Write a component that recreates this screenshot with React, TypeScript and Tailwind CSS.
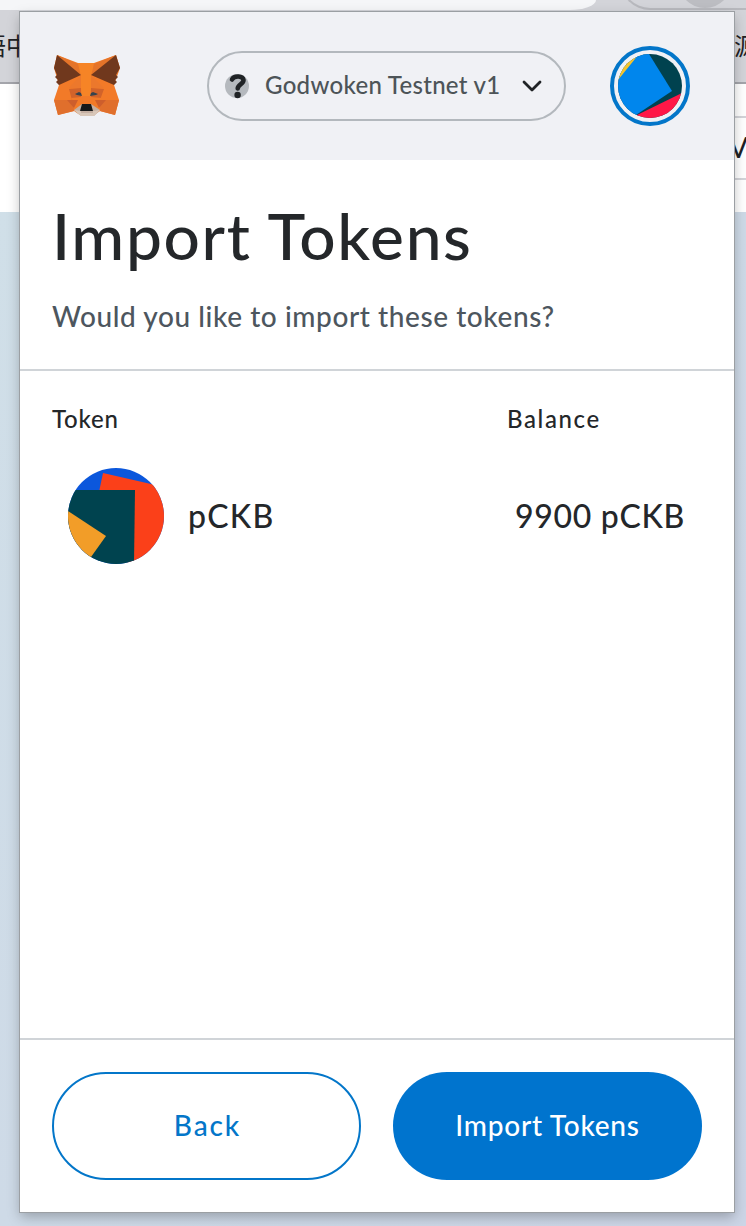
import React from "react";

function Fox() {
  return (
    <svg width="68" height="64" viewBox="0 0 68 64" aria-label="MetaMask">
      <path fill="#f27a28" d="m4 1 21 8h16l22-8 4 13-6 17 5 15-4 15-15-4-6 4H27l-6-4-16 4L1 46l5-15L1 14z" />
      <path fill="#f68426" d="M25 9h16l-4 33h-8z" />
      <path fill="#e57429" d="m4 1 21 9 3 12zM63 1 41 10l-3 12z" />
      <path fill="#e06f2c" d="M1 46h19l1 11-16 4zM47 46h19l-4 15-15-4z" />
      <path fill="#ec782c" d="m16 34 12-13v13zM51 34 38 21v13z" />
      <path fill="#d2632a" d="m16 35 12-1v9l-9 3zM51 35l-13-1v9l9 3z" />
      <path fill="#f27a28" d="m18 44 11-1 2 9-11-5zM49 44l-12-1-2 9 12-5z" />
      <path fill="#cd5e2c" d="M14 46h11l-4 8zM53 46H42l4 8z" />
      <path fill="#70381d" d="M4 1 28 21 6 31l-3-3 2-2-3-3 2-2-3-7zM63 1 38 21l23 10 3-3-2-2 3-3-2-2 4-7z" />
      <path fill="#36434e" d="m22 40 4-2 2 1 1 3-5-1zM45 40l-5-2-2 1-1 3 6-1z" />
      <path fill="#c4afa2" d="m21 56 8-6h9l9 6-6 6H28z" />
      <path fill="#d8c7b9" d="m21 56 7 1v2h12v-2l7-1-6 6H28z" />
      <path fill="#17191a" d="M29 50h9l2 7H27z" />
    </svg>
  );
}

function AccountIcon() {
  return (
    <svg width="64" height="64" viewBox="0 0 64 64" className="rounded-full">
      <path fill="#00424f" d="M0 0h64v64H0z" />
      <path fill="#0086ed" d="M0 22 20 0h11l23 37-36 24H0z" />
      <path fill="#f3c42d" d="M0 0h21L0 26z" />
      <path fill="#ff1747" d="m17 62 47-23v25H17z" />
    </svg>
  );
}

function TokenIcon() {
  return (
    <svg width="96" height="96" viewBox="0 0 96 96" className="rounded-full">
      <path fill="#0b57dc" d="M0 0h96v96H0z" />
      <path fill="#fb4019" d="m35 5 61 14v77H60L31 24z" />
      <path fill="#00434f" d="M0 22h67l-1 74H0z" />
      <path fill="#f29d28" d="m0 43 38 25-20 28H0z" />
    </svg>
  );
}

function BrowserPage() {
  return (
    <div className="flex h-full flex-col bg-[#d0dde8]">
      <div className="flex h-[10px] shrink-0 justify-between overflow-hidden bg-[#d3d4d9]">
        <div className="h-[10px] w-[596px] rounded-br-[26px_10px] bg-[#f5f6f8]" />
        <div className="mt-[-52px] h-[62px] w-[126px] rounded-bl-[30px] border-b-2 border-l-2 border-[#b8b9be]">
          <div className="ml-[56px] h-[60px] w-[54px] rounded-full bg-[#bcbdc2]" />
        </div>
      </div>
      <div className="flex h-[74px] shrink-0 items-center justify-between overflow-hidden border-b-2 border-[#a4a5ab] bg-[#d3d4d9] text-[24px] text-[#202124]">
        <div className="-ml-[18px] whitespace-nowrap">语中</div>
        <div className="w-[12px] whitespace-nowrap">源</div>
      </div>
      <div className="flex h-[128px] shrink-0 justify-end bg-white pt-8">
        <div className="h-[64px] w-[17px] overflow-hidden border-y-2 border-[#d3d4d9] text-[28px] leading-[59px] text-[#202124]">V</div>
      </div>
      <div className="flex-1 bg-linear-to-br from-[#d0dfe8] to-[#ccd5e6]" />
    </div>
  );
}

export default function App() {
  return (
    <div className="relative h-[1226px] w-[746px] overflow-hidden font-['Lato','Noto_Sans_CJK_SC',sans-serif] text-[#24272a]">
      <BrowserPage />
      <main className="absolute top-3 left-5 flex h-[1200px] w-[714px] flex-col bg-white shadow-[0_0_0_1px_#9b9fa3,0_5px_12px_rgba(0,0,0,0.26)]">
        <header className="flex h-[148px] shrink-0 items-center bg-[#f0f1f5] pl-[33px]">
          <Fox />
          <button className="ml-[86px] flex h-[70px] w-[359px] items-center rounded-full border-2 border-[#b3b8bd] pl-4">
            <svg width="24" height="26" viewBox="0 0 24 26">
              <circle cx="12" cy="13" r="12" fill="#b5b9be" />
              <path d="M7 6.5c2-4 11-4 11.5 .5 .3 4-5.5 4-5.8 8.5" fill="none" stroke="#202326" strokeWidth="4.6" strokeLinecap="round" />
              <circle cx="12.6" cy="22" r="3.2" fill="#202326" />
            </svg>
            <span className="ml-4 w-[236px] pb-[2px] text-left text-[24px] leading-8 font-medium tracking-[0.3px] whitespace-nowrap text-[#4d5458]">Godwoken Testnet v1</span>
            <svg className="ml-[21px]" width="20" height="14" viewBox="0 0 20 14">
              <path d="m2 3 8 8 8-8" fill="none" stroke="#202326" strokeWidth="2.8" strokeLinecap="round" strokeLinejoin="round" />
            </svg>
          </button>
          <div className="ml-11 flex size-20 items-center justify-center rounded-full border-4 border-[#0376c9]">
            <AccountIcon />
          </div>
        </header>
        <section className="h-[211px] shrink-0 border-b-2 border-[#d0d4d8] px-8 pt-[36px]">
          <h1 className="text-[64px] leading-[80px] font-medium tracking-[1.65px] whitespace-nowrap">Import Tokens</h1>
          <p className="mt-[20px] text-[28px] leading-10 font-medium tracking-[0.57px] whitespace-nowrap text-[#4d565e]">Would you like to import these tokens?</p>
        </section>
        <section className="flex-1 px-8 pt-[30px]">
          <div className="flex text-[24px] leading-9 font-medium">
            <span className="w-[455px] tracking-[0.8px]">Token</span>
            <span className="tracking-[1.6px]">Balance</span>
          </div>
          <div className="mt-[31px] flex h-24 items-center pl-4 text-[32px] leading-10 font-medium">
            <TokenIcon />
            <span className="ml-6 w-[327px] tracking-[1.3px]">pCKB</span>
            <span className="tracking-[0.7px] whitespace-nowrap">9900 pCKB</span>
          </div>
        </section>
        <footer className="grid h-[174px] shrink-0 grid-cols-2 gap-8 border-t-2 border-[#d0d4d8] px-8 pt-8 pb-8 text-[28px] font-medium">
          <button className="h-[108px] rounded-full border-2 border-[#0376c9] pb-[3px] pl-[2px] tracking-[1.9px] text-[#0376c9]">Back</button>
          <button className="h-[108px] rounded-full bg-[#0074ce] pb-[3px] tracking-[0.75px] text-white">Import Tokens</button>
        </footer>
      </main>
    </div>
  );
}
